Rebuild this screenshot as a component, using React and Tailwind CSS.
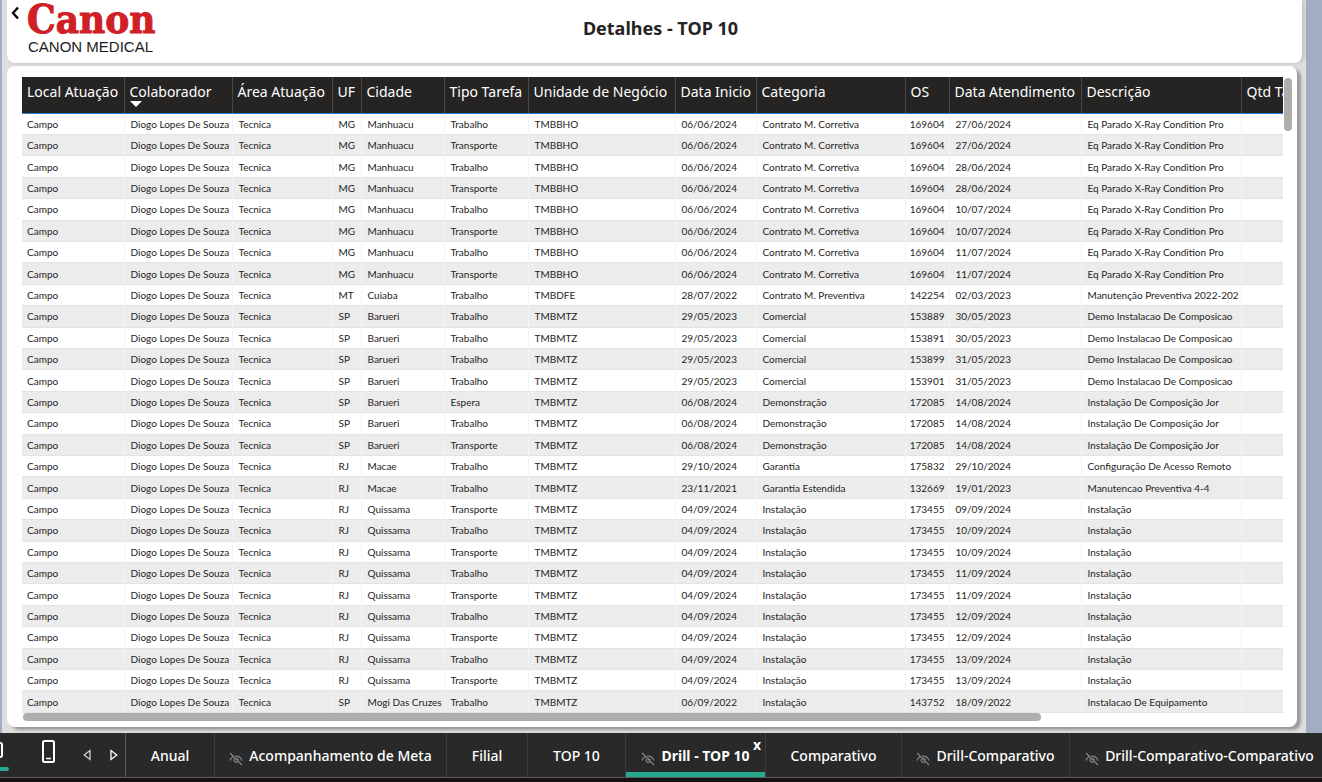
import React from "react";

const columns = [
  { label: "Local Atuação", width: "w-[102px]" },
  { label: "Colaborador", width: "w-[108px]", sorted: true },
  { label: "Área Atuação", width: "w-[100px]" },
  { label: "UF", width: "w-[29px]" },
  { label: "Cidade", width: "w-[83px]" },
  { label: "Tipo Tarefa", width: "w-[84px]" },
  { label: "Unidade de Negócio", width: "w-[147px]" },
  { label: "Data Inicio", width: "w-[81px]" },
  { label: "Categoria", width: "w-[149px]" },
  { label: "OS", width: "w-[44px]", right: true },
  { label: "Data Atendimento", width: "w-[132px]" },
  { label: "Descrição", width: "w-[160px]" },
  { label: "Qtd Tarefas", width: "w-[341px]" },
];

const corr = (tipo, data) => ["MG", "Manhuacu", tipo, "TMBBHO", "06/06/2024", "Contrato M. Corretiva", "169604", data, "Eq Parado X-Ray Condition Pro"];
const comercial = (os, data) => ["SP", "Barueri", "Trabalho", "TMBMTZ", "29/05/2023", "Comercial", os, data, "Demo Instalacao De Composicao"];
const demo = (tipo) => ["SP", "Barueri", tipo, "TMBMTZ", "06/08/2024", "Demonstração", "172085", "14/08/2024", "Instalação De Composição Jor"];
const inst = (tipo, data) => ["RJ", "Quissama", tipo, "TMBMTZ", "04/09/2024", "Instalação", "173455", data, "Instalação"];

const rows = [
  corr("Trabalho", "27/06/2024"),
  corr("Transporte", "27/06/2024"),
  corr("Trabalho", "28/06/2024"),
  corr("Transporte", "28/06/2024"),
  corr("Trabalho", "10/07/2024"),
  corr("Transporte", "10/07/2024"),
  corr("Trabalho", "11/07/2024"),
  corr("Transporte", "11/07/2024"),
  ["MT", "Cuiaba", "Trabalho", "TMBDFE", "28/07/2022", "Contrato M. Preventiva", "142254", "02/03/2023", "Manutenção Preventiva 2022-202"],
  comercial("153889", "30/05/2023"),
  comercial("153891", "30/05/2023"),
  comercial("153899", "31/05/2023"),
  comercial("153901", "31/05/2023"),
  demo("Espera"),
  demo("Trabalho"),
  demo("Transporte"),
  ["RJ", "Macae", "Trabalho", "TMBMTZ", "29/10/2024", "Garantia", "175832", "29/10/2024", "Configuração De Acesso Remoto"],
  ["RJ", "Macae", "Trabalho", "TMBMTZ", "23/11/2021", "Garantia Estendida", "132669", "19/01/2023", "Manutencao Preventiva 4-4"],
  inst("Transporte", "09/09/2024"),
  inst("Trabalho", "10/09/2024"),
  inst("Transporte", "10/09/2024"),
  inst("Trabalho", "11/09/2024"),
  inst("Transporte", "11/09/2024"),
  inst("Trabalho", "12/09/2024"),
  inst("Transporte", "12/09/2024"),
  inst("Trabalho", "13/09/2024"),
  inst("Transporte", "13/09/2024"),
  ["SP", "Mogi Das Cruzes", "Trabalho", "TMBMTZ", "06/09/2022", "Instalação", "143752", "18/09/2022", "Instalacao De Equipamento"],
].map((r) => ["Campo", "Diogo Lopes De Souza", "Tecnica", ...r, ""]);

const tabs = [
  { label: "Anual", width: "w-[89px]" },
  { label: "Acompanhamento de Meta", width: "w-[232px]", hidden: true },
  { label: "Filial", width: "w-[81px]" },
  { label: "TOP 10", width: "w-[98px]" },
  { label: "Drill - TOP 10", width: "w-[140px]", hidden: true, active: true },
  { label: "Comparativo", width: "w-[136px]" },
  { label: "Drill-Comparativo", width: "w-[168px]", hidden: true },
  { label: "Drill-Comparativo-Comparativo", width: "w-[260px]", hidden: true },
];

function HiddenIcon() {
  return (
    <svg viewBox="0 0 14 14" className="mt-1.5 size-3.5 shrink-0" fill="none" stroke="#8a8a8a" strokeWidth="1.1" aria-hidden="true">
      <path d="M1 1l12 12" />
      <path d="M1 8.500c.6-1.800 1.700-3 3.200-3.700M6 4.200c3.400-.4 6 1.300 7 4.300" />
      <path d="M8.800 9.800a2.300 2.300 0 0 1-3.400-3" />
      <path d="M7.300 6.200a2.300 2.300 0 0 1 2 2" />
    </svg>
  );
}

function ReportHeader() {
  return (
    <header className="grid h-[63px] shrink-0 grid-cols-[1fr_auto_1fr] rounded-b-lg bg-white shadow-[2px_0_4px_rgba(0,0,0,0.15)]">
      <div className="flex items-start gap-2 pl-1">
        <button type="button" aria-label="Voltar" className="mt-1.5">
          <svg viewBox="0 0 8 14" className="h-3.5 w-2" fill="none" stroke="#000" strokeWidth="2.400" aria-hidden="true">
            <path d="M7 1.500L2 7l5 5.500" />
          </svg>
        </button>
        <div className="flex flex-col">
          <span className="font-['DejaVu_Serif_Condensed','DejaVu_Serif',serif] text-[40px] leading-[38px] font-bold text-[#cf2028] [-webkit-text-stroke:1px_#cf2028]">Canon</span>
          <span className="pl-px font-['Liberation_Sans',sans-serif] text-[15px] leading-[18px] text-[#1a1a1a]">CANON MEDICAL</span>
        </div>
      </div>
      <h1 className="pt-4 pl-3 text-[18px] leading-6 font-bold text-[#252423]">Detalhes - TOP 10</h1>
    </header>
  );
}

function DetailsTable() {
  return (
    <table className="h-full w-[1560px] table-fixed border-collapse text-left">
      <thead>
        <tr className="h-9 bg-[#252423] text-[14px] leading-5 text-white">
          {columns.map((c) => (
            <th key={c.label} scope="col" className={`${c.width} border-r border-b border-r-[#4a4948] border-b-[#2f7fd6] pt-[5px] pl-[5px] align-top font-normal whitespace-nowrap`}>
              {c.label}
              {c.sorted && (
                <svg viewBox="0 0 12 6" className="-mt-px h-1.5 w-3" fill="#fff" aria-label="Ordem decrescente">
                  <path d="M0 0h12L6 6z" />
                </svg>
              )}
            </th>
          ))}
        </tr>
      </thead>
      <tbody className="font-['Lato',sans-serif]">
        {rows.map((row, i) => (
          <tr key={i} className="border-b border-[#e3e3e3] text-[10px] leading-3 text-[#252423] even:bg-[#ececec]">
            {row.map((cell, j) => (
              <td key={j} className={`border-r border-r-[#f3f3f3] whitespace-nowrap ${columns[j].right ? "pr-1 text-right" : j === 0 ? "pl-[5px]" : "pl-1.5"}`}>
                {cell}
              </td>
            ))}
          </tr>
        ))}
      </tbody>
    </table>
  );
}

function TabBar() {
  return (
    <footer className="shrink-0 border-b-4 border-[#151111] bg-[#292929] text-white">
      <div className="flex h-[45px] overflow-hidden border-b border-[#5c5c5c]">
        <div className="flex w-[126px] shrink-0 border-r border-[#5c5c5c]">
          <button type="button" aria-label="Layout da área de trabalho" className="flex w-[9px] flex-col justify-between pt-[9px] pb-1.5">
            <span className="h-4 w-[3px] rounded-r-sm border-2 border-l-0 border-white" />
            <span className="h-1 w-full rounded-r-sm bg-[#27a98f]" />
          </button>
          <button type="button" aria-label="Layout móvel" className="ml-[33px] pb-2">
            <svg viewBox="0 0 13 23" className="h-[23px] w-[13px]" fill="none" stroke="#fff" strokeWidth="2" aria-hidden="true">
              <rect x="1" y="1" width="11" height="21" rx="1.500" />
              <path d="M4 18.500h5" strokeWidth="1.500" />
            </svg>
          </button>
          <button type="button" aria-label="Página anterior" className="ml-7">
            <svg viewBox="0 0 8 12" className="h-3 w-2" fill="none" stroke="#d0d0d0" strokeWidth="1.300" aria-hidden="true">
              <path d="M7 1.500v9L1.200 6z" />
            </svg>
          </button>
          <button type="button" aria-label="Próxima página" className="ml-[19px]">
            <svg viewBox="0 0 8 12" className="h-3 w-2" fill="none" stroke="#fff" strokeWidth="1.300" aria-hidden="true">
              <path d="M1 1.500v9L6.800 6z" />
            </svg>
          </button>
        </div>
        <nav className="flex min-w-0 flex-1" aria-label="Páginas">
          {tabs.map((t) => (
            <div key={t.label} className={`${t.width} relative flex shrink-0 border-r border-[#3d3d3d]`}>
              <button
                type="button"
                className={`flex flex-1 items-center justify-center gap-1.5 text-[14px] leading-5 whitespace-nowrap ${t.active ? "border-b-[5px] border-[#27a98f] pt-[7px] font-bold" : "pt-0.5 font-medium"}`}
              >
                {t.hidden && <HiddenIcon />}
                {t.label}
              </button>
              {t.active && (
                <button type="button" aria-label="Fechar página" className="absolute top-1 right-1 text-[14px] leading-4 font-bold">
                  x
                </button>
              )}
            </div>
          ))}
        </nav>
      </div>
    </footer>
  );
}

export default function App() {
  return (
    <div className="flex h-screen min-h-[600px] flex-col overflow-hidden bg-[#a1adc2] font-['Noto_Sans',sans-serif]">
      <div className="mr-4 ml-0.5 flex min-h-0 flex-1 flex-col gap-[3px] bg-[#dedede] pr-1 pb-1.5 pl-[5px]">
        <ReportHeader />
        <main className="mr-[5px] flex min-h-0 flex-1 flex-col rounded-lg bg-white pt-[11px] pr-[5px] pb-1.5 pl-[15px] shadow-[4px_3px_3px_rgba(0,0,0,0.3)]">
          <div className="flex min-h-0 flex-1">
            <div className="min-w-0 flex-1 overflow-hidden">
              <DetailsTable />
            </div>
            <div className="flex w-[9px] justify-end pt-px">
              <div className="h-[53px] w-2 rounded-full bg-[#b0aeac]" />
            </div>
          </div>
          <div className="h-2 pr-3 pl-px">
            <div className="h-full w-[81%] rounded-full bg-[#b0aeac]" />
          </div>
        </main>
      </div>
      <TabBar />
    </div>
  );
}
